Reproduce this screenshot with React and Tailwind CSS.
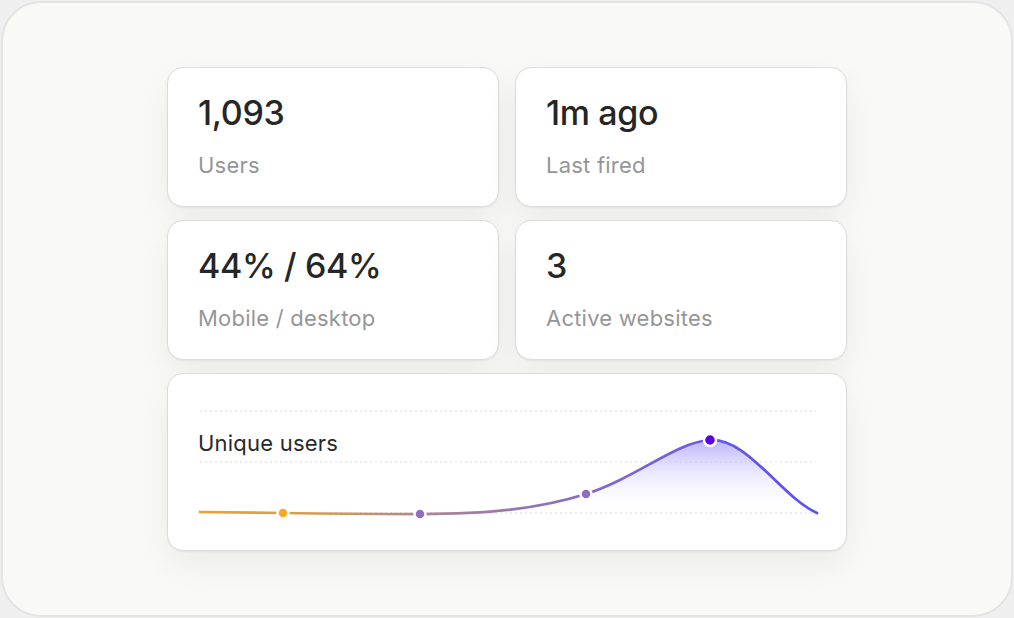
const stats = [
  { value: "1,093", label: "Users" },
  { value: "1m ago", label: "Last fired" },
  { value: "44% / 64%", label: "Mobile / desktop" },
  { value: "3", label: "Active websites" },
];

const cardClass =
  "bg-white border border-[#dcdcdc] rounded-2xl shadow-[0_1px_2px_rgba(0,0,0,0.05),0_14px_36px_rgba(0,0,0,0.06)]";

const StatCard = ({ value, label }) => (
  <div className={`${cardClass} h-[140px] pl-[30px] pt-[28px]`}>
    <div className="text-[34px] leading-none font-medium text-[#262626] tracking-[-0.01em]">
      {value}
    </div>
    <div className="mt-6 text-[22px] leading-none text-[#969696] tracking-[0.01em]">
      {label}
    </div>
  </div>
);

const curve =
  "M32 138 L115 139 C180 140 230 140 252 140 C320 140 370 135 418 120 C470 103 508 68 542 66 C580 64 612 122 649 139";

const UniqueUsersChart = () => (
  <div className={`${cardClass} relative col-span-2 h-[178px] overflow-hidden`}>
    <svg
      className="absolute inset-0"
      width="680"
      height="178"
      viewBox="0 0 680 178"
      fill="none"
    >
      <defs>
        <linearGradient id="lineGrad" x1="32" y1="0" x2="649" y2="0" gradientUnits="userSpaceOnUse">
          <stop offset="0" stopColor="#e6a43a" />
          <stop offset="0.2" stopColor="#d49a55" />
          <stop offset="0.38" stopColor="#a98594" />
          <stop offset="0.62" stopColor="#8a6bc2" />
          <stop offset="0.82" stopColor="#6a5ae2" />
          <stop offset="1" stopColor="#5b50f2" />
        </linearGradient>
        <linearGradient id="areaGrad" x1="0" y1="66" x2="0" y2="140" gradientUnits="userSpaceOnUse">
          <stop offset="0" stopColor="#aea8fa" stopOpacity="0.85" />
          <stop offset="1" stopColor="#ffffff" stopOpacity="0" />
        </linearGradient>
      </defs>

      {[37, 88, 139].map((y) => (
        <line
          key={y}
          x1="32"
          x2="648"
          y1={y}
          y2={y}
          stroke="#d8d8d8"
          strokeWidth="1"
          strokeDasharray="2 3"
        />
      ))}

      <path d={`${curve} L649 140 L32 140 Z`} fill="url(#areaGrad)" />
      <path d={curve} stroke="url(#lineGrad)" strokeWidth="2.75" strokeLinecap="round" />

      <circle cx="115" cy="139" r="5.5" fill="#f8a823" stroke="#fff" strokeWidth="2.5" />
      <circle cx="252" cy="140" r="5.5" fill="#8f6dc0" stroke="#fff" strokeWidth="2.5" />
      <circle cx="418" cy="120" r="5.5" fill="#8f6dc0" stroke="#fff" strokeWidth="2.5" />
      <circle cx="542" cy="66" r="6" fill="#5b00e0" stroke="#fff" strokeWidth="2.5" />
    </svg>
    <div className="relative pl-[30px] pt-[58px] text-[22px] leading-none text-[#2a2a2a] tracking-[0.01em]">
      Unique users
    </div>
  </div>
);

export default function App() {
  return (
    <div className="w-[1014px] h-[618px] bg-[#efefef] p-px font-['Inter',sans-serif]">
      <div className="h-[616px] rounded-[40px] border-2 border-[#e4e4e4] bg-[#f9f9f8] flex items-center justify-center">
        <div className="grid grid-cols-2 w-[680px] gap-x-4 gap-y-[13px]">
          {stats.map((s) => (
            <StatCard key={s.label} value={s.value} label={s.label} />
          ))}
          <UniqueUsersChart />
        </div>
      </div>
    </div>
  );
}
